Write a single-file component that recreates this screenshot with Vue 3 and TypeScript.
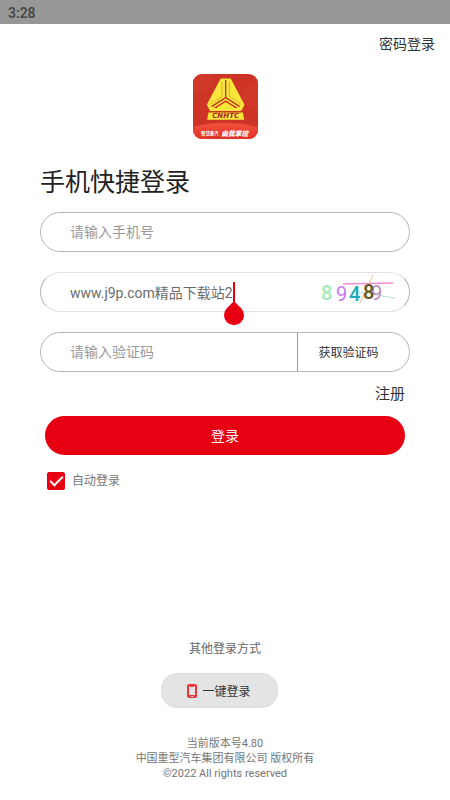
<script setup lang="ts">
import { ref } from 'vue'

const phone = ref('')
const captcha = ref('www.j9p.com精品下载站2')
const smsCode = ref('')
const autoLogin = ref(true)
</script>

<template>
  <div class="screen">
    <header class="status">3:28</header>
    <nav class="top"><a href="#password">密码登录</a></nav>

    <main>
      <svg class="logo" viewBox="0 0 193 193" role="img" aria-label="CNHTC">
        <defs>
          <clipPath id="tile"><rect width="193" height="193" rx="27" /></clipPath>
          <linearGradient id="glow" x1="0" y1="0" x2="0" y2="1">
            <stop offset="0" stop-color="#f4503c" />
            <stop offset="1" stop-color="#e03227" />
          </linearGradient>
        </defs>
        <g clip-path="url(#tile)">
          <rect width="193" height="193" fill="#cd3425" />
          <circle cx="12" cy="8" r="48" fill="#d0392a" />
          <circle cx="190" cy="65" r="44" fill="#d0392a" />
          <path d="M0 157Q96 133 193 157V193H0Z" fill="url(#glow)" />
          <path d="M82 13H112L153 91L143 110H51L41 91Z" fill="#f8e63a" />
          <path d="M97 18V70L55 97M97 70L139 97" fill="none" stroke="#b9361f" stroke-width="4" />
          <path d="M97 78L133 101H61Z" fill="#cd3425" />
          <path d="M97 83L122 99V110H72V99Z" fill="#f8e63a" />
          <path d="M86 24V67L51 90M108 24V67L143 90" fill="none" stroke="#d98a2c" stroke-width="2" />
          <path d="M46 114H148L152 136H42Z" fill="#f8e63a" />
          <text x="97" y="131" text-anchor="middle" class="brand">CNHTC</text>
          <text x="24" y="181" class="small">智慧重汽</text>
          <text x="84" y="184" class="slogan">由我掌控</text>
        </g>
      </svg>

      <form @submit.prevent>
        <h1>手机快捷登录</h1>
        <div class="field">
          <input v-model="phone" type="tel" placeholder="请输入手机号" aria-label="手机号" />
        </div>
        <div class="field light">
          <div class="entry">
            <input v-model="captcha" type="text" aria-label="图形验证码" />
            <svg class="cursor" viewBox="0 0 20 44" aria-hidden="true">
              <path d="M9 0H11V22H9Z" />
              <path d="M10 19L17 26A10 10 0 1 1 3 26Z" />
            </svg>
          </div>
          <svg class="captcha" viewBox="0 0 80 36" role="img" aria-label="89489">
            <path d="M22 10L72 9" stroke="#f28bd2" stroke-width="1.5" />
            <path d="M30 17L74 24" stroke="#b9e5c4" />
            <text x="0" y="26" fill="#a5ebb5" class="bold">8</text>
            <text x="15" y="27" fill="#c879ed">9</text>
            <text x="28" y="27" fill="#20a9b9" class="bold">4</text>
            <path d="M52 1L39 29" stroke="#f0c49e" />
            <text x="50" y="26" fill="#bd8ac2">9</text>
            <text x="42" y="25" fill="#62551d" class="bold">8</text>
          </svg>
        </div>
        <div class="field">
          <input v-model="smsCode" type="text" placeholder="请输入验证码" aria-label="短信验证码" />
          <button type="button" class="code">获取验证码</button>
        </div>
        <a class="register" href="#register">注册</a>
        <button class="submit" type="submit">登录</button>
        <label class="auto"><input v-model="autoLogin" type="checkbox" />自动登录</label>
      </form>
    </main>

    <footer>
      <p class="other">其他登录方式</p>
      <button type="button" class="onekey">
        <svg viewBox="0 0 10 14" aria-hidden="true">
          <path fill-rule="evenodd" d="M2 0H8Q10 0 10 2V12Q10 14 8 14H2Q0 14 0 12V2Q0 0 2 0ZM2 2V11H8V2H7V3H3V2ZM4 12V13H6V12Z" />
        </svg>
        一键登录
      </button>
      <p class="legal">当前版本号4.80<br />中国重型汽车集团有限公司 版权所有<br />©2022 All rights reserved</p>
    </footer>
  </div>
</template>

<style>
body {
  margin: 0;
  background: #fff;
}
</style>

<style scoped>
.screen {
  box-sizing: border-box;
  min-height: 100vh;
  display: flex;
  flex-direction: column;
  font-family: Roboto, "Noto Sans CJK SC", sans-serif;
  color: #333;
}
input,
button {
  font: inherit;
  color: inherit;
  border: 0;
  margin: 0;
  padding: 0;
  background: none;
}
a {
  color: inherit;
  text-decoration: none;
}
.status {
  height: 24px;
  line-height: 26px;
  padding-left: 8px;
  background: #979797;
  color: #444;
  font-size: 14px;
  font-weight: 500;
}
.top {
  padding: 0 15px;
  text-align: right;
  font-size: 14px;
  line-height: 40px;
}
main {
  display: flex;
  flex-direction: column;
  padding: 10px 40px 0;
}
.logo {
  width: 65px;
  height: 65px;
  align-self: center;
}
.brand {
  font: italic 700 21px "DejaVu Sans", sans-serif;
  fill: #a92c1e;
}
.small {
  font-size: 13px;
  font-weight: 700;
  fill: #fff;
}
.slogan {
  font: italic 900 20px "Noto Sans CJK SC", serif;
  fill: #fff;
}
form {
  display: flex;
  flex-direction: column;
}
h1 {
  margin: 25px 0 11px;
  font-size: 25px;
  line-height: 37px;
  font-weight: 400;
  color: #222;
}
.field {
  box-sizing: border-box;
  display: flex;
  align-items: center;
  height: 40px;
  margin-bottom: 20px;
  padding-left: 29px;
  border: 1px solid #b5b5b5;
  border-radius: 20px;
}
.light {
  border-color: #e2e2e2 #b5b5b5;
}
.field input {
  width: 100%;
  min-width: 0;
  flex: 1;
  height: 38px;
  font-size: 14px;
  color: #6c6c6c;
  outline: none;
}
.field input::placeholder {
  color: #999;
  opacity: 1;
}
.entry {
  position: relative;
  flex: 1;
  display: flex;
}
.entry input {
  height: 36px;
}
.cursor {
  position: absolute;
  left: 154px;
  top: 8px;
  width: 20px;
  height: 44px;
  fill: #e60012;
}
.captcha {
  width: 80px;
  height: 36px;
  margin-right: 8px;
  font-size: 20px;
  fill: none;
}
.captcha .bold {
  font-weight: 500;
}
.code {
  width: 112px;
  height: 38px;
  padding: 0 10px 2px 0;
  border-left: 1px solid #999;
  font-size: 12px;
}
.register {
  align-self: flex-end;
  margin: -9px 5px 11px;
  font-size: 15px;
  line-height: 22px;
}
.submit {
  height: 39px;
  margin: 0 5px;
  padding-bottom: 2px;
  border-radius: 20px;
  background: #e60012;
  color: #fff;
  font-size: 14px;
}
.auto {
  display: flex;
  align-items: center;
  align-self: flex-start;
  gap: 7px;
  margin: 17px 7px;
  font-size: 12px;
  line-height: 18px;
  color: #777;
}
.auto input {
  appearance: none;
  display: grid;
  place-items: center;
  width: 18px;
  height: 18px;
  border: 1px solid #e60012;
  border-radius: 2px;
}
.auto input:checked {
  background: #e60012;
}
.auto input:checked::after {
  content: "";
  width: 11px;
  height: 5px;
  margin-bottom: 4px;
  border: solid #fff;
  border-width: 0 0 2px 2px;
  box-sizing: content-box;
  transform: rotate(-45deg);
}
footer {
  display: flex;
  flex-direction: column;
  align-items: center;
  margin-top: auto;
  padding: 0 20px 19px;
  text-align: center;
}
footer p {
  margin: 0;
}
.other {
  font-size: 12px;
  line-height: 18px;
  color: #666;
}
.onekey {
  display: flex;
  align-items: center;
  justify-content: center;
  gap: 5px;
  width: 117px;
  height: 35px;
  margin: 15px 12px 28px 0;
  border: 1px solid #ddd;
  border-radius: 16px;
  background: #e4e4e4;
  font-size: 12px;
}
.onekey svg {
  width: 10px;
  height: 14px;
  fill: #f0343c;
}
.legal {
  font-size: 11px;
  line-height: 15px;
  color: #757575;
}
</style>
